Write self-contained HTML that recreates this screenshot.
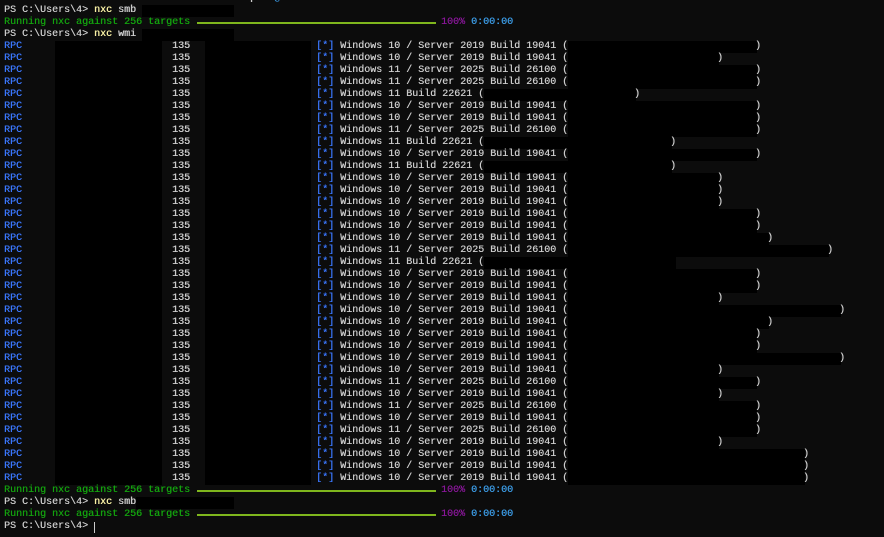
<!DOCTYPE html>
<html><head><meta charset="utf-8"><style>
body{margin:0;width:884px;height:535px;background:#0c0c0c;overflow:hidden;position:relative;font-family:"Liberation Mono",monospace;font-size:10px;color:#cccccc}
#w{position:absolute;left:0;top:2px;width:884px;height:535px}
.r{position:absolute;left:4px;height:12px;line-height:12px;white-space:pre;text-shadow:0.3px 0 0 currentColor}
.b{position:absolute;background:#000;height:12px}
.blue{color:#3b78ff}.g{color:#13a10e}.y{color:#f9f1a5}.p{color:#881798}.t{color:#3a96dd}
.bar{position:absolute;height:2px;background:#7fb61d;left:197px;width:239px}
</style></head><body><div id="w">
<div class="r" style="top:-9px"><span class="y">nxc wmi 172.16.15.16</span>  -d testlab.local  -p  <span class="t">P@ssw0rd</span></div>
<div class="b" style="top:3px;left:142px;width:92px"></div>
<div class="r" style="top:3px">PS C:\Users\4&gt; <span class="y">nxc</span> smb</div>
<div class="r g" style="top:15px">Running nxc against 256 targets</div><div class="bar" style="top:20px"></div>
<div class="r" style="top:15px;left:441px"><span class="p">100%</span> <span class="t">0:00:00</span></div>
<div class="b" style="top:27px;left:142px;width:92px"></div>
<div class="r" style="top:27px">PS C:\Users\4&gt; <span class="y">nxc</span> wmi</div>
<div id="rows"></div>
<div class="r g" style="top:483px">Running nxc against 256 targets</div><div class="bar" style="top:488px"></div>
<div class="r" style="top:483px;left:441px"><span class="p">100%</span> <span class="t">0:00:00</span></div>
<div class="b" style="top:495px;left:136px;width:98px"></div>
<div class="r" style="top:495px">PS C:\Users\4&gt; <span class="y">nxc</span> smb</div>
<div class="r g" style="top:507px">Running nxc against 256 targets</div><div class="bar" style="top:512px"></div>
<div class="r" style="top:507px;left:441px"><span class="p">100%</span> <span class="t">0:00:00</span></div>
<div class="r" style="top:519px">PS C:\Users\4&gt; </div>
<div style="position:absolute;left:94px;top:520px;width:1px;height:11px;background:#ccc"></div>
</div>
<script>
(function(){
var A="Windows 10 / Server 2019 Build 19041 (",B="Windows 11 / Server 2025 Build 26100 (",C="Windows 11 Build 22621 (";
var d=[[A,757],[A,719],[B,757],[B,757],[C,636],[A,757],[A,757],[B,757],[C,672],[A,757],[C,672],[A,719],[A,719],[A,719],[A,757],[A,757],[A,769],[B,829],[C,0],[A,757],[A,757],[A,719],[A,841],[A,769],[A,757],[A,757],[A,841],[A,719],[B,757],[A,719],[B,757],[A,757],[B,757],[A,719],[A,805],[A,805],[A,805]];
var h="";
for(var i=0;i<d.length;i++){var ty=39+12*i,s=d[i][0],c=d[i][1];
var px=4+(56+s.length)*6;
h+='<div class="b" style="top:'+ty+'px;left:55px;width:107px"></div><div class="b" style="top:'+ty+'px;left:205px;width:106px"></div>';
var end=c?c:676;h+='<div class="b" style="top:'+ty+'px;left:'+px+'px;width:'+(end-px)+'px"></div>';
h+='<div class="r" style="top:'+ty+'px"><span class="blue">RPC</span>                         135                     <span class="blue">[*]</span> '+s+'</div>';
if(c)h+='<div class="r" style="top:'+ty+'px;left:'+(c-2)+'px">)</div>';}
document.getElementById("rows").innerHTML=h;
})();
</script>
</body></html>
